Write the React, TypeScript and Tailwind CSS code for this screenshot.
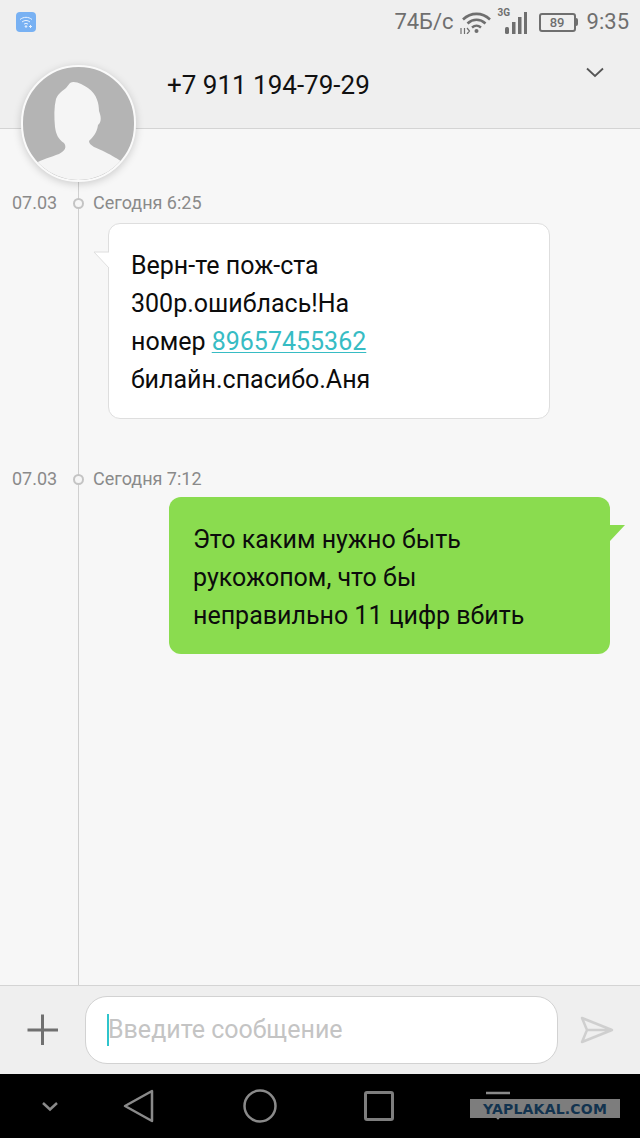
import { ReactNode } from "react";

function TimeRow({ time }: { time: string }) {
  return (
    <div className="flex items-center h-6">
      <span className="w-[62px] pl-3 text-[18px] text-[#8a8a8a] leading-6">07.03</span>
      <span className="w-[11px] h-[11px] ml-[11px] rounded-full border-2 border-[#c4c4c4] bg-[#f6f6f6] relative" />
      <span className="ml-[9px] text-[18px] text-[#8a8a8a] leading-6">{time}</span>
    </div>
  );
}

function Bubble({ green, children }: { green?: boolean; children: ReactNode }) {
  if (green) {
    return (
      <div className="relative ml-[169px] w-[441px] h-[157px] rounded-xl bg-[#8adc4f] pl-6 pt-6 text-[25px] leading-[38px] text-[#0c0c0c]">
        {children}
        <svg className="absolute left-[441px] top-[28px]" width="16" height="18" viewBox="0 0 16 18">
          <path d="M0 0H15L0 16Z" fill="#8adc4f" />
        </svg>
      </div>
    );
  }
  return (
    <div className="relative ml-[108px] w-[442px] h-[196px] rounded-xl bg-white border border-[#dedede] pl-[22px] pt-[23px] text-[25px] leading-[38px] text-[#0c0c0c]">
      {children}
      <svg className="absolute left-[-16px] top-[27px]" width="17" height="20" viewBox="0 0 17 20">
        <path d="M16 1H1L16 17Z" fill="#fff" />
        <path d="M16 1H1L16 17" fill="none" stroke="#dedede" />
      </svg>
    </div>
  );
}

export default function App() {
  return (
    <div className="relative flex flex-col h-[1138px] w-[640px] overflow-hidden bg-[#efefef]" style={{ fontFamily: "Roboto, 'Noto Sans', sans-serif" }}>
      {/* status bar */}
      <div className="flex items-center h-[44px] pl-[16px] pr-[11px] text-[#6f6f6f]">
        <div className="w-5 h-5 rounded-[4px] bg-[#78b1f3] flex items-center justify-center">
          <svg width="14" height="12" viewBox="0 0 14 12" fill="none" stroke="#e8f2ff" strokeWidth="1">
            <path d="M1 3.5C4.5.6 9.5.6 13 3.5M3 6c2.5-2 5.500-2 8 0M5 8.200c1.300-1 2.700-1 4 0" />
            <circle cx="7" cy="10.500" r=".8" fill="#e8f2ff" />
            <path d="M10 10.500h3M11.500 9v3" />
          </svg>
        </div>
        <div className="ml-auto flex items-center">
          <span className="text-[22px] leading-none">74Б/с</span>
          <svg className="ml-[6px]" width="32" height="24" viewBox="0 0 32 24" fill="none" stroke="#6f6f6f">
            <path d="M3 9.500C11 2 22 2 30 9.500" strokeWidth="2.600" />
            <path d="M7.500 13.500c5.500-5 12.500-5 18 0" strokeWidth="2.600" />
            <path d="M12 17.500c3-2.500 6-2.500 9 0" strokeWidth="2.400" />
            <circle cx="16.500" cy="21" r="2" fill="#6f6f6f" stroke="none" />
            <path d="M1 18v6M4.500 18v6M7 18l2.500 3L7 24" strokeWidth="1.200" />
          </svg>
          <div className="relative ml-[6px] w-[29px] h-[26px]">
            <span className="absolute left-0 top-[-1px] text-[10px] font-bold leading-none text-[#6f6f6f]">3G</span>
            <svg className="absolute left-0 top-0" width="29" height="26" viewBox="0 0 29 26" fill="#6f6f6f">
              <rect x="7" y="18" width="4" height="7" rx="1.500" />
              <rect x="14" y="13" width="3.500" height="12" />
              <rect x="20" y="8" width="3.500" height="17" />
              <rect x="26" y="3" width="3" height="22" />
            </svg>
          </div>
          <div className="ml-[12px] flex items-center">
            <div className="w-[37px] h-[19px] rounded-[3px] border-2 border-[#6f6f6f] flex items-center justify-center text-[13px] leading-none font-medium">89</div>
            <div className="w-[2px] h-[8px] bg-[#6f6f6f] rounded-r-sm" />
          </div>
          <span className="ml-[9px] text-[22px] leading-none">9:35</span>
        </div>
      </div>

      {/* header */}
      <div className="flex items-center h-[85px] border-b border-[#d4d4d4] pl-[167px] pr-[36px] pb-[3px]">
        <span className="text-[26px] text-[#111] leading-none">+7 911 194-79-29</span>
        <svg className="ml-auto mb-[25px]" width="18" height="11" viewBox="0 0 18 11" fill="none" stroke="#555" strokeWidth="1.800">
          <path d="M1 1.500L9 9L17 1.500" />
        </svg>
      </div>

      {/* messages */}
      <div className="relative flex-1 bg-[#f7f7f7] pt-[62px]">
        <div className="absolute left-[78px] top-[52px] bottom-0 w-px bg-[#d0d0d0]" />
        <div className="relative">
          <TimeRow time="Сегодня 6:25" />
          <div className="mt-[8px]">
            <Bubble>
              <div>Верн-те пож-ста</div>
              <div>300р.ошиблась!На</div>
              <div>
                номер <span className="text-[#37bcc4] underline underline-offset-2 decoration-1">89657455362</span>
              </div>
              <div>билайн.спасибо.Аня</div>
            </Bubble>
          </div>
          <div className="mt-[48px]">
            <TimeRow time="Сегодня 7:12" />
          </div>
          <div className="mt-[6px]">
            <Bubble green>
              <div>Это каким нужно быть</div>
              <div>рукожопом, что бы</div>
              <div>неправильно 11 цифр вбить</div>
            </Bubble>
          </div>
        </div>
      </div>

      {/* composer */}
      <div className="flex items-center h-[89px] border-t border-[#d4d4d4] bg-[#efefef] pl-[27px] pr-[26px]">
        <svg width="32" height="32" viewBox="0 0 32 32" stroke="#707070" strokeWidth="3">
          <path d="M0.500 16H31M15.500 0.500V31" />
        </svg>
        <div className="ml-[26px] flex items-center w-[473px] h-[68px] rounded-[22px] bg-white border border-[#d2d2d2] pl-[21px] text-[25px] text-[#c4c4c4]">
          <span className="w-[2px] h-8 bg-[#2fc4cc] mr-[-1px]" />
          <span>Введите сообщение</span>
        </div>
        <svg className="ml-[22px]" width="34" height="28" viewBox="0 0 34 28" fill="none" stroke="#cfcfcf" strokeWidth="2.500" strokeLinejoin="round">
          <path d="M2 2L32 14L2 26L7 14ZM7 14H32" />
        </svg>
      </div>

      {/* nav bar */}
      <div className="flex items-center h-[64px] bg-black">
        <svg className="ml-[41px]" width="18" height="11" viewBox="0 0 18 11" fill="none" stroke="#8a8a8a" strokeWidth="2.500">
          <path d="M2 2L9 8.500L16 2" />
        </svg>
        <svg className="ml-[64px]" width="32" height="34" viewBox="0 0 32 34" fill="none" stroke="#8a8a8a" strokeWidth="2.500" strokeLinejoin="round">
          <path d="M29 2V32L2 17Z" />
        </svg>
        <svg className="ml-[88px]" width="34" height="34" viewBox="0 0 34 34" fill="none" stroke="#8a8a8a" strokeWidth="2.500">
          <circle cx="17" cy="17" r="15.500" />
        </svg>
        <div className="ml-[87px] w-[30px] h-[30px] rounded-[3px] border-[3px] border-[#7e7e7e]" />
        <svg className="ml-[91px]" width="26" height="30" viewBox="0 0 26 30" fill="none" stroke="#8a8a8a" strokeWidth="2.500">
          <path d="M1 2H25M1 10H25M4 18L13 27L22 18" />
        </svg>
      </div>

      {/* avatar overlaps header and list */}
      <div className="absolute left-[21px] top-[65px] w-[115px] h-[117px] rounded-full border-[2px] border-[#fafafa] shadow-[0_2px_8px_rgba(0,0,0,0.18)] overflow-hidden bg-[#b4b4b4]">
        <svg width="111" height="113" viewBox="0 0 111 113">
          <path
            d="M47 16C52 13 60 18 65 21C74 27 76 37 76 44C78 49 79 55 75 58C74 66 70 70 66 74C66 79 74 81 82 85C90 89 95 92 99 95C88 108 72 113 55 113C38 113 23 108 11 97C20 92 28 90 36 87C42 84 44 80 41 76C35 72 33 67 32 60C31 50 31 40 33 32C35 26 41 23 43 21Z"
            fill="#f5f5f5"
          />
        </svg>
      </div>

      {/* watermark */}
      <div className="absolute left-[470px] top-[1099px] w-[150px] h-[19px] bg-[#7d7d7d] flex items-center justify-center text-[14px] leading-none font-black text-[#12334f] tracking-[0.2px]" style={{ fontFamily: "'DejaVu Sans', sans-serif" }}>
        YAPLAKAL.COM
      </div>
    </div>
  );
}
